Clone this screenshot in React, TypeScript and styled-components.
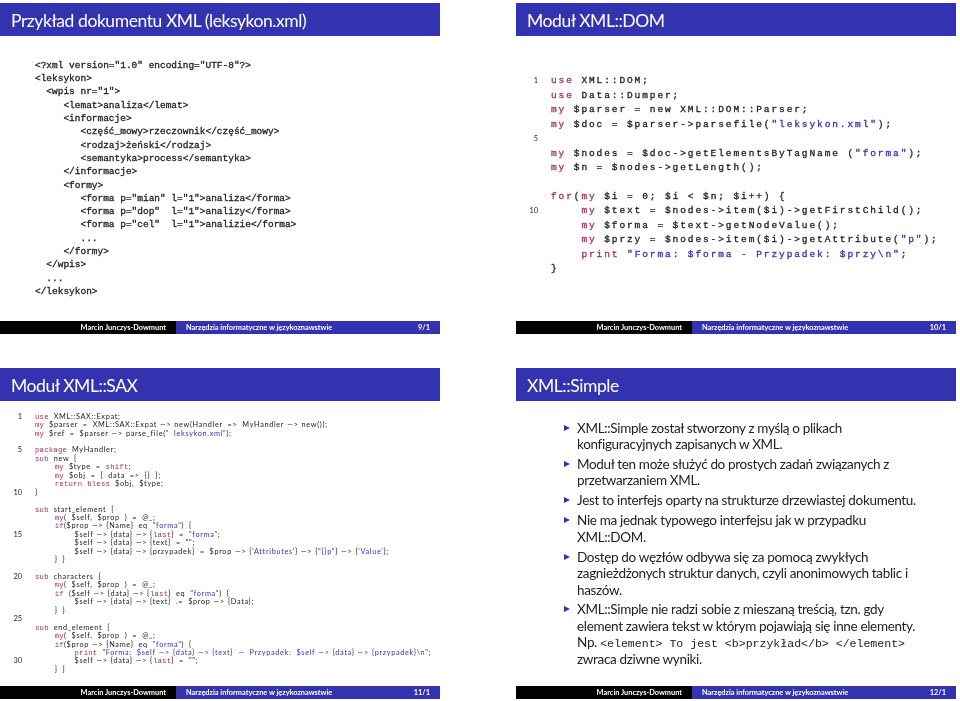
import React from "react";
import styled, { createGlobalStyle } from "styled-components";

const Global = createGlobalStyle`
  html, body { margin: 0; padding: 0; background: #fff; }
  body { width: 960px; height: 701px; overflow: hidden; font-family: "Lato", "Open Sans", sans-serif; }
`;

const Page = styled.div`
  display: grid;
  grid-template-columns: 440px 440px;
  grid-template-rows: 330px 330px;
  column-gap: 76px;
  row-gap: 35px;
  padding-top: 3px;
  filter: blur(0.35px);
`;

const SlideFrame = styled.section`
  display: flex;
  flex-direction: column;
  height: 330px;
  background: #fff;
  color: #111;
`;

const Header = styled.h1`
  margin: 0;
  height: 33px;
  flex: none;
  display: flex;
  align-items: center;
  padding: 2px 0 0 11px;
  box-sizing: border-box;
  background: #3333b2;
  color: #fff;
  font: 400 17.5px/1 "Lato", sans-serif;
  letter-spacing: -0.43px;
`;

const Body = styled.div`
  flex: 1;
  min-height: 0;
  display: flex;
  flex-direction: column;
  justify-content: center;
`;

const Footer = styled.footer`
  height: 12px;
  flex: none;
  display: grid;
  grid-template-columns: 176px 1fr;
  font: 700 7.38px/13px "Lato", sans-serif;
  color: #fff;
`;

const FooterAuthor = styled.div`
  background: #000;
  text-align: right;
  padding-right: 10px;
`;

const FooterTitle = styled.div`
  background: #3333b2;
  display: flex;
  justify-content: space-between;
  padding: 0 10px;
`;

const XmlBlock = styled.pre`
  margin: 0 0 0 35px;
  font: 400 9.47px/13.3px "Liberation Mono", monospace;
  -webkit-text-stroke: 0.3px #222;
  color: #222;
`;

const Listing = styled.div<{ $variant: "mono" | "sans" }>`
  display: flex;
  flex-direction: column;
  color: #222;
  font: ${(p) =>
    p.$variant === "mono"
      ? '400 9.5px/14.45px "Liberation Mono", monospace'
      : '400 7.3px/8.44px "Lato", sans-serif'};
  letter-spacing: ${(p) => (p.$variant === "mono" ? "1.9px" : "0.67px")};
  word-spacing: ${(p) => (p.$variant === "mono" ? "0" : "2.4px")};
  -webkit-text-stroke: ${(p) => (p.$variant === "mono" ? "0.3px" : "0")};
  transform: translateY(${(p) => (p.$variant === "mono" ? "-3px" : "0")});
`;

const ListingRow = styled.div<{ $variant: "mono" | "sans" }>`
  display: grid;
  grid-template-columns: 22px 1fr;
  column-gap: 13px;
  white-space: pre;
  height: ${(p) => (p.$variant === "mono" ? "14.45px" : "8.44px")};
`;

const LineNumber = styled.span`
  text-align: right;
  font-family: "Lato", sans-serif;
  font-size: 7.4px;
  font-weight: 400;
  letter-spacing: 0;
  color: #222;
  -webkit-text-stroke: 0;
`;

const Keyword = styled.span<{ $variant: "mono" | "sans" }>`
  color: #a5305f;
  ${(p) => p.$variant === "sans" && 'font-family: "Liberation Mono", monospace; letter-spacing: 0.2px;'}
`;

const Str = styled.span`
  color: #3333b2;
`;

const Arrow = styled.span`
  padding: 0 3px;
`;

const BulletList = styled.ul`
  list-style: none;
  margin: 0;
  padding: 0 0 0 48px;
  display: flex;
  flex-direction: column;
  gap: 3.4px;
  font: 400 13.5px/16.5px "Lato", sans-serif;
  letter-spacing: -0.33px;
  color: #222;
  width: 354px;
`;

const BulletItem = styled.li`
  display: flex;
  align-items: flex-start;
  gap: 7px;
`;

const Marker = styled.span`
  flex: none;
  width: 0;
  height: 0;
  margin-top: 5px;
  border-left: 6px solid #3333b2;
  border-top: 3.5px solid transparent;
  border-bottom: 3.5px solid transparent;
`;

const InlineCode = styled.code`
  font-family: "Liberation Mono", monospace;
  font-size: 11.55px;
  line-height: 1;
  letter-spacing: 0;
`;

const withArrows = (text: string) =>
  text.split(/(—>)/).map((t, i) =>
    t === "—>" ? <Arrow key={i}>{t}</Arrow> : <React.Fragment key={i}>{t}</React.Fragment>
  );

const renderCode = (line: string, v: "mono" | "sans") =>
  line.split(/(~[^~]*~|\^[^^]*\^)/).map((part, i) => {
    if (part.startsWith("~")) return <Keyword $variant={v} key={i}>{part.slice(1, -1)}</Keyword>;
    if (part.startsWith("^")) return <Str key={i}>{withArrows(part.slice(1, -1))}</Str>;
    return <React.Fragment key={i}>{withArrows(part)}</React.Fragment>;
  });

const CodeListing = ({ lines, variant }: { lines: string[]; variant: "mono" | "sans" }) => (
  <Listing $variant={variant}>
    {lines.map((l, i) => {
      const n = i + 1;
      return (
        <ListingRow $variant={variant} key={i}>
          <LineNumber>{n === 1 || n % 5 === 0 ? n : ""}</LineNumber>
          <span>{renderCode(l, variant)}</span>
        </ListingRow>
      );
    })}
  </Listing>
);

const Slide = ({ title, page, children }: { title: string; page: string; children: React.ReactNode }) => (
  <SlideFrame>
    <Header>{title}</Header>
    <Body>{children}</Body>
    <Footer>
      <FooterAuthor>Marcin Junczys-Dowmunt</FooterAuthor>
      <FooterTitle>
        <span>Narzędzia informatyczne w językoznawstwie</span>
        <span>{page}</span>
      </FooterTitle>
    </Footer>
  </SlideFrame>
);

const xml = `<?xml version="1.0" encoding="UTF-8"?>
<leksykon>
  <wpis nr="1">
     <lemat>analiza</lemat>
     <informacje>
        <część_mowy>rzeczownik</część_mowy>
        <rodzaj>żeński</rodzaj>
        <semantyka>process</semantyka>
     </informacje>
     <formy>
        <forma p="mian" l="1">analiza</forma>
        <forma p="dop"  l="1">analizy</forma>
        <forma p="cel"  l="1">analizie</forma>
        ...
     </formy>
  </wpis>
  ...
</leksykon>`;

const dom = [
  "~use~ XML::DOM;",
  "~use~ Data::Dumper;",
  "~my~ $parser = new XML::DOM::Parser;",
  '~my~ $doc = $parser->parsefile(^"leksykon.xml"^);',
  "",
  "~my~ $nodes = $doc->getElementsByTagName (^\"forma\"^);",
  "~my~ $n = $nodes->getLength();",
  "",
  "~for~(~my~ $i = 0; $i < $n; $i++) {",
  "    ~my~ $text = $nodes->item($i)->getFirstChild();",
  "    ~my~ $forma = $text->getNodeValue();",
  '    ~my~ $przy = $nodes->item($i)->getAttribute(^"p"^);',
  '    ~print~ ^"Forma: $forma - Przypadek: $przy\\n"^;',
  "}",
];

const sax = [
  "~use~ XML::SAX::Expat;",
  "~my~ $parser = XML::SAX::Expat—>new(Handler => MyHandler—>new());",
  '~my~ $ref = $parser—>parse_file(^" leksykon.xml"^);',
  "",
  "~package~ MyHandler;",
  "~sub~ new {",
  "    ~my~ $type = ~shift~;",
  "    ~my~ $obj = { data => {} };",
  "    ~return~ ~bless~ $obj, $type;",
  "}",
  "",
  "~sub~ start_element {",
  "    ~my~( $self, $prop ) = @_;",
  '    ~if~($prop—>{Name} eq ^"forma"^) {',
  '        $self—>{data}—>{~last~} = ^"forma"^;',
  '        $self—>{data}—>{text} = "";',
  "        $self—>{data}—>{przypadek} = $prop—>{^'Attributes'^}—>{^\"{}p\"^}—>{^'Value'^};",
  "    } }",
  "",
  "~sub~ characters {",
  "    ~my~( $self, $prop ) = @_;",
  '    ~if~ ($self—>{data}—>{~last~} eq ^"forma"^) {',
  "        $self—>{data}—>{text} .= $prop—>{Data};",
  "    } }",
  "",
  "~sub~ end_element {",
  "    ~my~( $self, $prop ) = @_;",
  '    ~if~($prop—>{Name} eq ^"forma"^) {',
  '        ~print~ ^"Forma: $self—>{data}—>{text} — Przypadek: $self—>{data}—>{przypadek}\\n"^;',
  '        $self—>{data}—>{~last~} = "";',
  "    } }",
];

const Item = ({ children }: { children: React.ReactNode }) => (
  <BulletItem>
    <Marker />
    <div>{children}</div>
  </BulletItem>
);

export default function App() {
  return (
    <>
      <Global />
      <Page>
        <Slide title="Przykład dokumentu XML (leksykon.xml)" page="9/1">
          <XmlBlock>{xml}</XmlBlock>
        </Slide>
        <Slide title="Moduł XML::DOM" page="10/1">
          <CodeListing lines={dom} variant="mono" />
        </Slide>
        <Slide title="Moduł XML::SAX" page="11/1">
          <CodeListing lines={sax} variant="sans" />
        </Slide>
        <Slide title="XML::Simple" page="12/1">
          <BulletList>
            <Item>XML::Simple został stworzony z myślą o plikach konfiguracyjnych zapisanych w XML.</Item>
            <Item>Moduł ten może służyć do prostych zadań związanych z przetwarzaniem XML.</Item>
            <Item>Jest to interfejs oparty na strukturze drzewiastej dokumentu.</Item>
            <Item>Nie ma jednak typowego interfejsu jak w przypadku XML::DOM.</Item>
            <Item>Dostęp do węzłów odbywa się za pomocą zwykłych zagnieżdżonych struktur danych, czyli anonimowych tablic i haszów.</Item>
            <Item>
              XML::Simple nie radzi sobie z mieszaną treścią, tzn. gdy element zawiera tekst w którym pojawiają się inne elementy. Np.{" "}
              <InlineCode>{"<element> To jest <b>przykład</b> </element>"}</InlineCode> zwraca dziwne wyniki.
            </Item>
          </BulletList>
        </Slide>
      </Page>
    </>
  );
}
